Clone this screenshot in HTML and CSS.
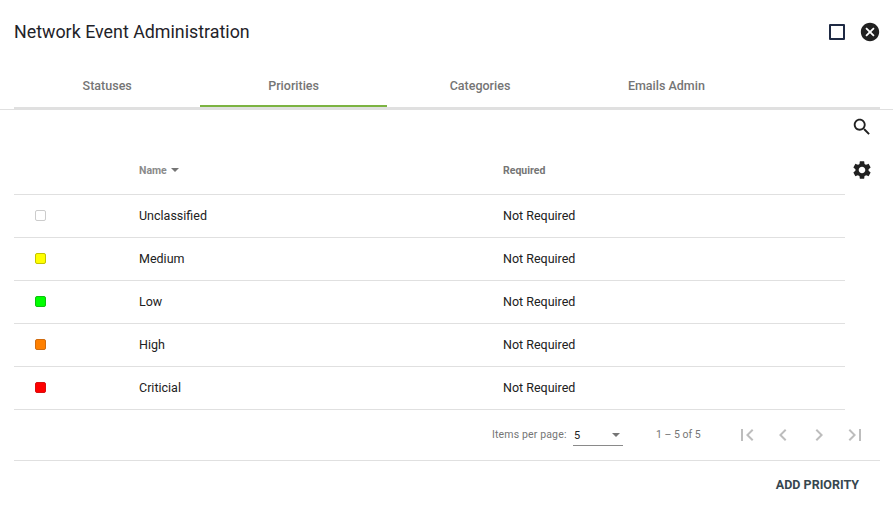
FILE: index.html
```html
<!DOCTYPE html>
<html lang="en">

<head>
    <meta charset="UTF-8">
    <title>Network Event Administration</title>
    <link rel="stylesheet" href="styles.css">
</head>

<body>
    <div class="title-bar">
        <h1>Network Event Administration</h1>
        <div class="window-icons">
            <span class="maximize"></span>
            <svg class="close" viewBox="0 0 24 24" width="22" height="22">
                <path d="M12 2C6.47 2 2 6.47 2 12s4.47 10 10 10 10-4.47 10-10S17.53 2 12 2zm5 13.59L15.59 17 12 13.41 8.41 17 7 15.59 10.59 12 7 8.41 8.41 7 12 10.59 15.59 7 17 8.41 13.41 12 17 15.59z" />
            </svg>
        </div>
    </div>

    <div class="tabs-line">
        <div class="tabs">
            <div class="tab">Statuses</div>
            <div class="tab active">Priorities</div>
            <div class="tab">Categories</div>
            <div class="tab">Emails Admin</div>
        </div>
    </div>

    <div class="content">
        <div class="table-area">
            <table class="grid">
                <thead>
                    <tr>
                        <th class="col-color"></th>
                        <th class="col-name">Name <span class="sort-arrow"></span></th>
                        <th class="col-required">Required</th>
                    </tr>
                </thead>
                <tbody>
                    <tr>
                        <td><span class="swatch swatch-none"></span></td>
                        <td>Unclassified</td>
                        <td>Not Required</td>
                    </tr>
                    <tr>
                        <td><span class="swatch swatch-yellow"></span></td>
                        <td>Medium</td>
                        <td>Not Required</td>
                    </tr>
                    <tr>
                        <td><span class="swatch swatch-green"></span></td>
                        <td>Low</td>
                        <td>Not Required</td>
                    </tr>
                    <tr>
                        <td><span class="swatch swatch-orange"></span></td>
                        <td>High</td>
                        <td>Not Required</td>
                    </tr>
                    <tr>
                        <td><span class="swatch swatch-red"></span></td>
                        <td>Criticial</td>
                        <td>Not Required</td>
                    </tr>
                </tbody>
            </table>

            <div class="paginator">
                <span class="per-page-label">Items per page:</span>
                <div class="per-page-select">
                    <span>5</span>
                    <span class="select-arrow"></span>
                </div>
                <span class="range">1 – 5 of 5</span>
                <div class="page-buttons">
                    <svg viewBox="0 0 24 24" width="24" height="24"><path d="M18.41 16.59L13.82 12l4.59-4.59L17 6l-6 6 6 6zM6 6h2v12H6z" /></svg>
                    <svg viewBox="0 0 24 24" width="24" height="24"><path d="M15.41 7.41L14 6l-6 6 6 6 1.41-1.41L10.83 12z" /></svg>
                    <svg viewBox="0 0 24 24" width="24" height="24"><path d="M10 6L8.59 7.41 13.17 12l-4.58 4.59L10 18l6-6z" /></svg>
                    <svg viewBox="0 0 24 24" width="24" height="24"><path d="M5.59 7.41L10.18 12l-4.59 4.59L7 18l6-6-6-6zM16 6h2v12h-2z" /></svg>
                </div>
            </div>
        </div>

        <div class="tools">
            <svg viewBox="0 0 24 24" width="22" height="22">
                <path d="M15.5 14h-.79l-.28-.27C15.41 12.59 16 11.11 16 9.5 16 5.91 13.09 3 9.5 3S3 5.91 3 9.5 5.91 16 9.5 16c1.61 0 3.09-.59 4.23-1.57l.27.28v.79l5 4.99L20.49 19l-4.99-5zm-6 0C7.01 14 5 11.99 5 9.5S7.01 5 9.5 5 14 7.01 14 9.5 11.99 14 9.5 14z" />
            </svg>
            <svg viewBox="0 0 24 24" width="22" height="22">
                <path d="M19.14 12.94c.04-.3.06-.61.06-.94 0-.32-.02-.64-.07-.94l2.03-1.58c.18-.14.23-.41.12-.61l-1.92-3.32c-.12-.22-.37-.29-.59-.22l-2.39.96c-.5-.38-1.03-.7-1.62-.94l-.36-2.54c-.04-.24-.24-.41-.48-.41h-3.84c-.24 0-.43.17-.47.41l-.36 2.54c-.59.24-1.13.57-1.62.94l-2.39-.96c-.22-.08-.47 0-.59.22L2.74 8.87c-.12.21-.08.47.12.61l2.03 1.58c-.05.3-.09.63-.09.94s.02.64.07.94l-2.03 1.58c-.18.14-.23.41-.12.61l1.92 3.32c.12.22.37.29.59.22l2.39-.96c.5.38 1.03.7 1.62.94l.36 2.54c.05.24.24.41.48.41h3.84c.24 0 .44-.17.47-.41l.36-2.54c.59-.24 1.13-.56 1.62-.94l2.39.96c.22.08.47 0 .59-.22l1.92-3.32c.12-.22.07-.47-.12-.61l-2.01-1.58zM12 15.6c-1.98 0-3.6-1.62-3.6-3.6s1.62-3.6 3.6-3.6 3.6 1.62 3.6 3.6-1.62 3.6-3.6 3.6z" />
            </svg>
        </div>
    </div>

    <div class="actions">
        <button class="add-button">ADD PRIORITY</button>
    </div>
</body>

</html>
```

FILE: styles.css
```css
html,
body {
    margin: 0;
    padding: 0;
}

body {
    font-family: Roboto, "Liberation Sans", sans-serif;
    background-color: #fff;
    color: #212121;
    overflow: hidden;
}

.title-bar {
    display: flex;
    justify-content: space-between;
    align-items: center;
    height: 64px;
    padding: 0 12px 0 14px;
}

h1 {
    margin: 0 0 2px;
    font-size: 17.85px;
    font-weight: 400;
    color: #1f2329;
}

.window-icons {
    display: flex;
    align-items: center;
    gap: 14px;
}

.maximize {
    width: 12px;
    height: 12px;
    border: 2px solid #1f2a44;
    border-radius: 1px;
}

.close {
    display: block;
    fill: #212121;
}

.tabs-line {
    padding: 0 13px 0 14px;
    border-bottom: 1px solid #e0e0e0;
}

.tabs {
    display: flex;
    border-bottom: 2px solid #e0e0e0;
}

.tab {
    width: 186.4px;
    height: 43px;
    line-height: 44px;
    text-align: center;
    font-size: 12.5px;
    font-weight: 500;
    color: #757575;
    box-sizing: border-box;
}

.tab.active {
    border-bottom: 2px solid #7cb342;
}

.content {
    display: flex;
    padding-left: 14px;
}

.table-area {
    width: 831px;
}

.grid {
    width: 100%;
    border-collapse: collapse;
    table-layout: fixed;
}

.grid th,
.grid td {
    padding: 0;
    text-align: left;
    border-bottom: 1px solid #e0e0e0;
}

.grid th {
    height: 84px;
    padding-top: 37px;
    box-sizing: border-box;
    font-size: 10.5px;
    font-weight: 700;
    color: #8a8a8a;
}

.grid th.col-required {
    color: #757575;
}

.grid td {
    height: 42px;
    font-size: 12.5px;
    color: #212121;
}

.col-color {
    width: 125px;
}

.col-name {
    width: 364px;
}

.sort-arrow {
    display: inline-block;
    margin-left: 2px;
    vertical-align: 2px;
    border-left: 4px solid transparent;
    border-right: 4px solid transparent;
    border-top: 4px solid #757575;
}

.swatch {
    display: block;
    width: 9px;
    height: 9px;
    margin-left: 21px;
    border: 1px solid;
    border-radius: 2px;
}

.swatch-none {
    background-color: #fff;
    border-color: #ccc;
}

.swatch-yellow {
    background-color: #ff0;
    border-color: #c4c400;
}

.swatch-green {
    background-color: #0f0;
    border-color: #10c010;
}

.swatch-orange {
    background-color: #ff8000;
    border-color: #d06c10;
}

.swatch-red {
    background-color: #f00;
    border-color: #d81010;
}

.paginator {
    display: flex;
    align-items: center;
    height: 50px;
    padding-left: 478px;
    font-size: 10.5px;
    color: #757575;
}

.paginator > * {
    flex: none;
}

.per-page-label {
    width: 81px;
    letter-spacing: 0.15px;
}

.per-page-select {
    display: flex;
    justify-content: space-between;
    align-items: center;
    box-sizing: border-box;
    width: 50px;
    height: 21px;
    margin-top: 2px;
    padding: 0 3px 0 1px;
    border-bottom: 1px solid #8a8a8a;
    font-size: 11px;
    color: #212121;
}

.select-arrow {
    border-left: 4px solid transparent;
    border-right: 4px solid transparent;
    border-top: 4px solid #757575;
}

.range {
    width: 84px;
    margin-left: 33px;
}

.page-buttons {
    display: flex;
    gap: 12px;
    margin-left: -5px;
    fill: #bdbdbd;
}

.tools {
    display: flex;
    flex-direction: column;
    align-items: center;
    gap: 21px;
    width: 34px;
    padding-top: 6px;
    fill: #212121;
}

.actions {
    display: flex;
    justify-content: flex-end;
    margin: 0 13px 0 14px;
    padding: 16px 21px 0 0;
    border-top: 1px solid #e0e0e0;
}

.add-button {
    padding: 0;
    border: none;
    background: none;
    font-family: inherit;
    font-size: 12.5px;
    font-weight: 700;
    color: #37474f;
}
```
